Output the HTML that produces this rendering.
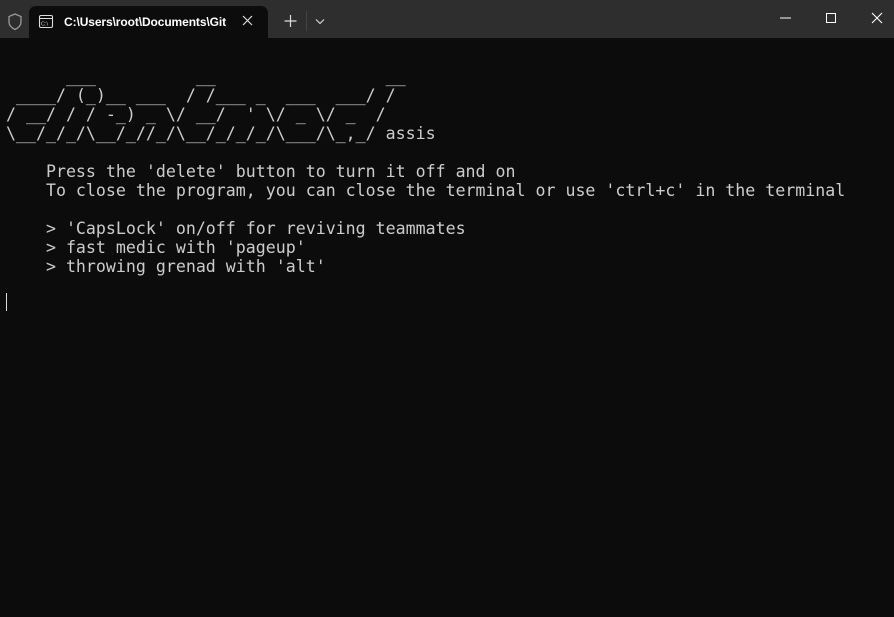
<!DOCTYPE html>
<html><head><meta charset="utf-8"><style>
html,body{margin:0;padding:0;width:894px;height:617px;overflow:hidden;background:#0c0c0c;}
.bar{position:absolute;left:0;top:0;width:894px;height:38px;background:#2e2e2e;}
.tab{position:absolute;left:29px;top:6px;width:239px;height:32px;background:#0c0c0c;border-radius:7px 7px 0 0;}
.tt{position:absolute;left:64px;top:15px;font:12px "Liberation Sans",sans-serif;color:#fff;font-weight:bold;letter-spacing:-0.1px}
pre{position:absolute;left:6px;top:67px;margin:0;font-family:"DejaVu Sans Mono","Liberation Mono",monospace;font-size:16.6px;line-height:19px;color:#cccccc;}
.cur{position:absolute;left:6px;top:293px;width:1px;height:18px;background:#ddd;}
</style></head><body>
<div class="bar"></div>
<div class="tab"></div>
<svg style="position:absolute;left:0;top:0" width="894" height="38">
<path d="M15 14 L21 16.5 V22 C21 26 18 28 15 29.5 C12 28 9 26 9 22 V16.5 Z" fill="none" stroke="#9a9a9a" stroke-width="1.3"/>
<rect x="39.5" y="15.5" width="13" height="12" rx="1.5" fill="none" stroke="#ddd" stroke-width="1.1"/>
<line x1="40" y1="18.5" x2="52" y2="18.5" stroke="#ddd" stroke-width="1"/>
<text x="41" y="25.5" font-family="Liberation Sans" font-size="5.5" fill="#ddd">C:\</text>
<path d="M243 16 L252 25 M252 16 L243 25" stroke="#ddd" stroke-width="1.2"/>
<path d="M290.5 15 V27 M284.5 21 H296.5" stroke="#ddd" stroke-width="1.2"/>
<line x1="306.5" y1="11" x2="306.5" y2="31" stroke="#444"/>
<path d="M316 19.5 L320 23.5 L324 19.5" fill="none" stroke="#ddd" stroke-width="1.1"/>
<line x1="780" y1="18" x2="791" y2="18" stroke="#fff" stroke-width="1"/>
<rect x="826.5" y="13.5" width="9" height="9" fill="none" stroke="#fff" stroke-width="1"/>
<path d="M872 13 L882 23 M882 13 L872 23" stroke="#fff" stroke-width="1.1"/>
</svg>
<div class="tt">C:\Users\root\Documents\Git</div>
<pre>      ___          __                 __
 ____/ (_)__ ___  / /___ _  ___  ___/ /
/ __/ / / -_) _ \/ __/  ' \/ _ \/ _  /
\__/_/_/\__/_//_/\__/_/_/_/\___/\_,_/ assis

    Press the 'delete' button to turn it off and on
    To close the program, you can close the terminal or use 'ctrl+c' in the terminal

    &gt; 'CapsLock' on/off for reviving teammates
    &gt; fast medic with 'pageup'
    &gt; throwing grenad with 'alt'
</pre>
<div class="cur"></div>
</body></html>
